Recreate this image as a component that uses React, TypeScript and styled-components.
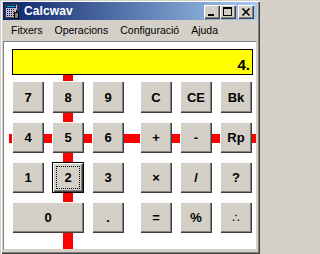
import styled, { createGlobalStyle } from 'styled-components';

const GlobalStyle = createGlobalStyle`
  html, body {
    margin: 0;
    padding: 0;
    background: #d4d0c8;
  }
  body {
    font-family: 'Liberation Sans', Arial, sans-serif;
  }
`;

const Window = styled.div`
  box-sizing: border-box;
  width: 260px;
  height: 254px;
  padding: 2px 3px 4px 3px;
  display: flex;
  flex-direction: column;
  background: #d4d0c8;
  box-shadow: inset 1px 1px 0 #d4d0c8, inset 2px 2px 0 #ffffff,
    inset -1px -1px 0 #404040, inset -2px -2px 0 #808080;
`;

const TitleBar = styled.div`
  height: 18px;
  display: flex;
  align-items: center;
  padding: 0 3px 0 1px;
  background: linear-gradient(to right, #0a246a, #a6caf0);
`;

const TitleText = styled.span`
  margin-left: 4px;
  flex: 1;
  color: #ffffff;
  font: bold 12px 'Liberation Sans', Arial, sans-serif;
  letter-spacing: 0.1px;
`;

const CaptionButton = styled.div<{ $gap?: boolean }>`
  width: 16px;
  height: 14px;
  margin-left: ${({ $gap }) => ($gap ? '2px' : '0')};
  margin-top: 1px;
  background: #d4d0c8;
  box-shadow: inset 1px 1px 0 #ffffff, inset -1px -1px 0 #404040,
    inset -2px -2px 0 #808080;
  display: flex;

  svg {
    display: block;
  }
`;

const MenuBar = styled.div`
  height: 20px;
  display: flex;
  align-items: center;
  padding: 0 0 1px 2px;
`;

const MenuItem = styled.span`
  padding: 0 6px;
  font: 10.5px 'Liberation Sans', Arial, sans-serif;
  color: #000000;
`;

const Client = styled.div`
  flex: 1;
  display: flex;
  flex-direction: column;
  background: #ffffff;
  border: 1px solid;
  border-color: #808080 #d4d0c8 #d4d0c8 #808080;
`;

const Display = styled.div`
  box-sizing: border-box;
  height: 26px;
  margin: 7px 3px 0 8px;
  padding: 7px 2px 0 0;
  background: #ffff00;
  border: 1px solid #000000;
  text-align: right;
  font: bold 15px/15px 'Liberation Sans', Arial, sans-serif;
  color: #000000;
`;

const Keypad = styled.div`
  flex: 1;
  display: flex;
  gap: 16px;
  padding: 6px 0 0 8px;
  background: linear-gradient(#ff0000, #ff0000) 59px 0 / 10px 100% no-repeat,
    linear-gradient(#ff0000, #ff0000) 5px 59px / calc(100% - 5px) 9px no-repeat,
    #ffffff;
`;

const KeyGroup = styled.div`
  display: grid;
  grid-template-columns: repeat(3, 32px);
  grid-template-rows: 32px 31px 31px 31px;
  column-gap: 8px;
  row-gap: 9px;
`;

const Key = styled.div<{ $span?: number; $focused?: boolean; $glyph?: boolean }>`
  grid-column: span ${({ $span }) => $span ?? 1};
  display: flex;
  align-items: center;
  justify-content: center;
  background: #d4d0c8;
  color: #000000;
  font: ${({ $glyph }) =>
    $glyph
      ? "12px 'DejaVu Sans', sans-serif"
      : "bold 13px 'Liberation Sans', Arial, sans-serif"};
  box-shadow: ${({ $focused }) =>
    $focused
      ? 'inset 1px 1px 0 #000, inset -1px -1px 0 #000, inset 2px 2px 0 #fff, inset -2px -2px 0 #404040, inset -3px -3px 0 #808080'
      : 'inset 1px 1px 0 #fff, inset -1px -1px 0 #404040, inset -2px -2px 0 #808080'};
  outline: ${({ $focused }) => ($focused ? '1px dotted #000' : 'none')};
  outline-offset: -5px;
`;

function AppIcon() {
  return (
    <svg width="16" height="16" viewBox="0 0 16 16" shapeRendering="crispEdges">
      <rect x="1" y="1" width="12" height="13" fill="#c0c0c0" stroke="#404040" />
      <rect x="2" y="2" width="10" height="3" fill="#0a246a" />
      <rect x="3" y="3" width="8" height="1" fill="#00c0c0" />
      {[0, 1, 2, 3].map((r) =>
        [0, 1, 2, 3].map((c) => (
          <rect
            key={`${r}-${c}`}
            x={3 + c * 2}
            y={6 + r * 2}
            width="1"
            height="1"
            fill={c === 3 ? '#800000' : '#000080'}
          />
        ))
      )}
      <rect x="10" y="9" width="4" height="6" fill="#808080" stroke="#000" />
      <rect x="12" y="7" width="1" height="2" fill="#000" />
    </svg>
  );
}

function MinimizeGlyph() {
  return (
    <svg width="16" height="14" viewBox="0 0 16 14" shapeRendering="crispEdges">
      <rect x="4" y="9" width="6" height="2" fill="#000" />
    </svg>
  );
}

function MaximizeGlyph() {
  return (
    <svg width="16" height="14" viewBox="0 0 16 14" shapeRendering="crispEdges">
      <rect x="3" y="2" width="9" height="2" fill="#000" />
      <rect x="3" y="2" width="1" height="9" fill="#000" />
      <rect x="11" y="2" width="1" height="9" fill="#000" />
      <rect x="3" y="10" width="9" height="1" fill="#000" />
    </svg>
  );
}

function CloseGlyph() {
  return (
    <svg width="16" height="14" viewBox="0 0 16 14">
      <path d="M4.5 3.5 L11.5 10.5 M11.5 3.5 L4.5 10.5" stroke="#000" strokeWidth="1.6" />
    </svg>
  );
}

const leftKeys = [
  { label: '7' },
  { label: '8' },
  { label: '9' },
  { label: '4' },
  { label: '5' },
  { label: '6' },
  { label: '1' },
  { label: '2', focused: true },
  { label: '3' },
  { label: '0', span: 2 },
  { label: '.' },
];

const rightKeys = [
  { label: 'C' },
  { label: 'CE' },
  { label: 'Bk' },
  { label: '+' },
  { label: '-' },
  { label: 'Rp' },
  { label: '×' },
  { label: '/' },
  { label: '?' },
  { label: '=' },
  { label: '%' },
  { label: '∴', glyph: true },
];

type KeyDef = { label: string; span?: number; focused?: boolean; glyph?: boolean };

function KeyBlock({ keys }: { keys: KeyDef[] }) {
  return (
    <KeyGroup>
      {keys.map((k) => (
        <Key key={k.label} $span={k.span} $focused={k.focused} $glyph={k.glyph}>
          {k.label}
        </Key>
      ))}
    </KeyGroup>
  );
}

export default function App() {
  return (
    <>
      <GlobalStyle />
      <Window>
        <TitleBar>
          <AppIcon />
          <TitleText>Calcwav</TitleText>
          <CaptionButton>
            <MinimizeGlyph />
          </CaptionButton>
          <CaptionButton>
            <MaximizeGlyph />
          </CaptionButton>
          <CaptionButton $gap>
            <CloseGlyph />
          </CaptionButton>
        </TitleBar>
        <MenuBar>
          <MenuItem>Fitxers</MenuItem>
          <MenuItem>Operacions</MenuItem>
          <MenuItem>Configuració</MenuItem>
          <MenuItem>Ajuda</MenuItem>
        </MenuBar>
        <Client>
          <Display>4.</Display>
          <Keypad>
            <KeyBlock keys={leftKeys} />
            <KeyBlock keys={rightKeys} />
          </Keypad>
        </Client>
      </Window>
    </>
  );
}
